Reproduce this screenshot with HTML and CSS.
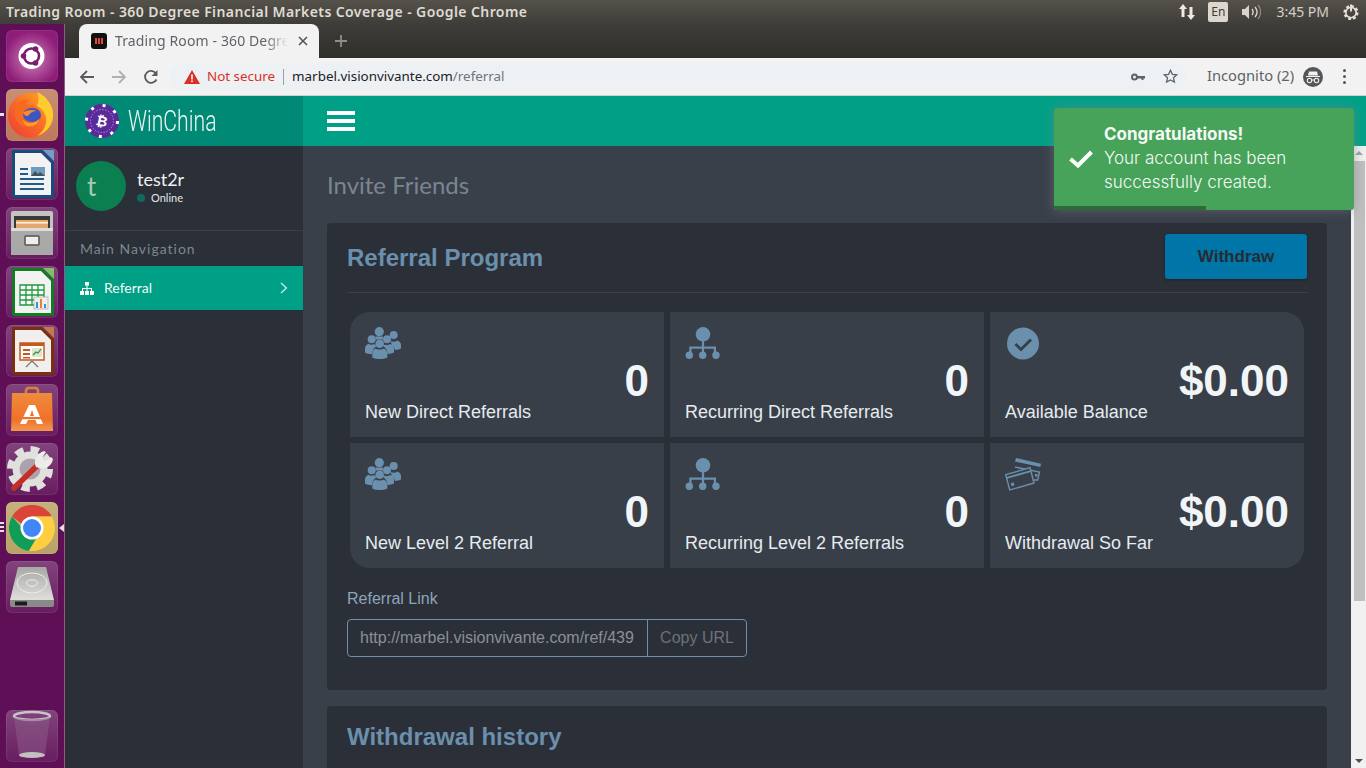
FILE: index.html
```html
<!DOCTYPE html>
<html lang="en">
  <head>
    <meta charset="UTF-8" />
    <title>Trading Room - 360 Degree Financial Markets Coverage</title>
    <link rel="stylesheet" href="styles.css">
  </head>
  <body>
    <svg class="defs">
      <symbol id="i-users" viewBox="0 0 36 32">
        <circle cx="14.300" cy="4.700" r="4.600" />
        <path d="M10.500 9.500h7.500v3h-7.500z" />
        <circle cx="28.700" cy="8" r="4" />
        <path d="M25 13.500c1 .800 2.500 1.200 3.800 1.200s2.500-.400 3.500-1.200c2 .600 3.700 2.300 3.700 4.500v3.500c-1.500 .800-3 1.200-6 1.500-.500-2-1.500-3.500-3-4.500-.500-2-1-3.500-2-5z" />
        <circle cx="6.700" cy="12.300" r="4" />
        <circle cx="22" cy="12.300" r="4" />
        <path d="M3.500 16.800c1 .800 2 1 3.200 1s2-.200 3-.800c.500 1 1 1.500 1.800 2.200-2.500 1.500-4 4-4.500 8C4 27 1.500 26.500 0 25.500V21.500c0-2 1.500-3.900 3.500-4.700z" />
        <path d="M18 17.500c1.200 .300 2.800 .500 4 .500s2.500-.500 3.500-1c2 .800 3.500 2.700 3.500 4.800v3.700c-1.500 .800-4 1.300-6.500 1.500-.500-4-2-6.500-4.500-8 .300-.500 .500-1 .500-1.500z" />
        <circle cx="14.700" cy="16.700" r="4.300" />
        <path d="M10.500 21.500c1.200 .700 2.800 1 4.300 1s3-.300 4.200-1c2 1 3.300 3 3.300 5.500v3.500c-2 1-5 1.500-7.500 1.500s-5.500-.500-7.500-1.500V27c0-2.500 1.200-4.500 3.200-5.500z" />
      </symbol>
      <symbol id="i-sitemap" viewBox="0 0 36 33">
        <circle cx="18" cy="7.300" r="7.300" />
        <path d="M16.900 13h2.200v6.600H31V27h-2.200v-5.200H19.100V27h-2.200v-5.200H6.500V27H4.300v-7.400h12.600z" />
        <circle cx="4.300" cy="28.300" r="3.700" />
        <circle cx="17.700" cy="28.300" r="3.700" />
        <circle cx="31" cy="28.300" r="3.700" />
      </symbol>
    </svg>

    <div class="panel">
      <div class="panel-title">Trading Room - 360 Degree Financial Markets Coverage - Google Chrome</div>
      <div class="panel-tray">
        <svg width="18" height="18" viewBox="0 0 18 18"><path d="M5 1l4 5H6.500v8h-3V6H1zM13 17l4-5h-2.500V4h-3v8H9z" fill="#eeeae2"/></svg>
        <span class="tray-lang">En</span>
        <svg width="20" height="18" viewBox="0 0 20 18"><path d="M1 6h3l4-4v14l-4-4H1z" fill="#d8d4cc"/><path d="M11 6c1.500 2 1.500 4 0 6M14 4c2.500 3 2.500 7 0 10" stroke="#d8d4cc" stroke-width="1.400" fill="none"/><path d="M17 2c3.500 4 3.500 10 0 14" stroke="#8d8a83" stroke-width="1.200" fill="none"/></svg>
        <span class="tray-clock">3:45 PM</span>
        <svg width="18" height="18" viewBox="0 0 18 18"><circle cx="9" cy="9.500" r="6" fill="none" stroke="#e4e0d8" stroke-width="3.200" stroke-dasharray="2.600 2" /><circle cx="9" cy="9.500" r="5.200" fill="none" stroke="#e4e0d8" stroke-width="1.600"/><path d="M9 1.500v7" stroke="#e4e0d8" stroke-width="2"/></svg>
      </div>
    </div>

    <div class="desktop">
      <nav class="launcher">
        <div class="tile tile-ubuntu">
          <svg viewBox="0 0 52 52"><circle cx="25.500" cy="26" r="13" fill="#fff"/><circle cx="25.500" cy="26" r="7.500" fill="none" stroke="#7a1f6d" stroke-width="2.600"/><circle cx="25.500" cy="26" r="5.200" fill="#fff"/><circle cx="17.500" cy="26" r="2.800" fill="#7a1f6d"/><circle cx="29.500" cy="19" r="2.800" fill="#7a1f6d"/><circle cx="29.500" cy="33" r="2.800" fill="#7a1f6d"/></svg>
        </div>
        <div class="tile tile-firefox pip">
          <svg viewBox="0 0 52 52"><defs><linearGradient id="ff" x1="1" y1="0" x2="0" y2="1"><stop offset="0" stop-color="#ffb21f"/><stop offset=".55" stop-color="#f8662a"/><stop offset="1" stop-color="#ee3a37"/></linearGradient></defs><circle cx="24.500" cy="26.500" r="22.500" fill="url(#ff)"/><path d="M31 3c11 5 17 15 16 25-1 9-7 16-16 19 7-5 10-12 9-18-1-6-5-10-9-12 2-5 2-10 0-14z" fill="#ffcb2f"/><path d="M11 14c4-3 8-4 13-3-3 1-4 3-4 5 7-1 14 3 15 10 1 6-4 12-11 12-8 1-14-4-15-11-.500-5 .500-9 2-13z" fill="#f76a22"/><ellipse cx="26" cy="26" rx="9" ry="7" fill="#3d56c4"/><path d="M17 24c3-3 9-4 14-2-4 0-7 2-8 4-2 2-4 1-6-2z" fill="#fb8a2a"/><path d="M17 31c3 4 11 5 16-1-1 5-6 8-11 7-3-1-5-3-5-6z" fill="#ffa22a"/></svg>
        </div>
        <div class="tile">
          <svg viewBox="0 0 52 52"><path d="M6 2h30l12 12v34a2 2 0 0 1-2 2H8a2 2 0 0 1-2-2z" fill="#174d7d"/><path d="M9 5h26l10 10v32H9z" fill="#f2f2f2"/><path d="M37 2l11 11V2z" fill="#6f9ec6"/><path d="M14 20h8v2h-8zM14 25h8v2h-8zM14 30h24v2H14zM14 35h24v2H14zM14 40h24v2H14z" fill="#1f5c8d"/><rect x="25" y="19" width="14" height="9" fill="#6f9dbd"/><path d="M25 28l4-5 3 3 2-2 5 4z" fill="#45525a"/></svg>
        </div>
        <div class="tile">
          <svg viewBox="0 0 52 52"><rect x="5" y="4" width="42" height="44" rx="2" fill="#c4c4c2"/><rect x="8" y="9" width="36" height="12" fill="#3c3835"/><rect x="10" y="13" width="32" height="8" fill="#e7a870"/><rect x="10" y="15" width="32" height="1.500" fill="#fff2e0"/><rect x="5" y="21" width="42" height="27" rx="1" fill="#a9a9a7"/><rect x="5" y="21" width="42" height="3" fill="#dcdcda"/><rect x="19" y="29" width="14" height="9" rx="1" fill="#eee" stroke="#55534f" stroke-width="1.500"/></svg>
        </div>
        <div class="tile">
          <svg viewBox="0 0 52 52"><path d="M6 2h30l12 12v34a2 2 0 0 1-2 2H8a2 2 0 0 1-2-2z" fill="#117c22"/><path d="M9 5h26l10 10v32H9z" fill="#f2f2f2"/><path d="M37 2l11 11V2z" fill="#7fbf66"/><path d="M14 19h24v20H14z" fill="#fff"/><path d="M14 19h24v20H14zM14 24h24M14 29h24M14 34h24M20 19v20M26 19v20M32 19v20" stroke="#1d9a38" stroke-width="1.300" fill="none"/><rect x="28" y="31" width="14" height="12" fill="#eee" stroke="#9a9a9a" stroke-width=".6"/><path d="M30 36h2v6h-2z" fill="#3594d6"/><path d="M34 33h2v9h-2z" fill="#e9802b"/><path d="M38 38h2v4h-2z" fill="#3594d6"/></svg>
        </div>
        <div class="tile">
          <svg viewBox="0 0 52 52"><path d="M6 2h30l12 12v34a2 2 0 0 1-2 2H8a2 2 0 0 1-2-2z" fill="#7a2f0f"/><path d="M9 5h26l10 10v32H9z" fill="#f0efed"/><path d="M37 2l11 11V2z" fill="#c47a4a"/><rect x="14" y="18" width="24" height="17" fill="#fff" stroke="#c65a1e" stroke-width="1.500"/><rect x="14" y="18" width="24" height="3" fill="#c65a1e"/><path d="M17 24h7v2h-7zM17 28h7v2h-7zM17 32h7v1.500h-7z" fill="#c65a1e"/><rect x="26" y="23" width="10" height="9" fill="#dbe6cf"/><path d="M27 30l3-3 2 1 3-4" stroke="#3c8a3c" stroke-width="1.200" fill="none"/><path d="M26 36l-6 6M26 36l6 6" stroke="#777" stroke-width="1.200"/></svg>
        </div>
        <div class="tile">
          <svg viewBox="0 0 52 52"><defs><linearGradient id="bag" x1="0" y1="0" x2="0" y2="1"><stop offset="0" stop-color="#f08a3c"/><stop offset=".7" stop-color="#ef7229"/><stop offset="1" stop-color="#f39650"/></linearGradient></defs><path d="M20 12V7c0-2 1-3 3-3h6c2 0 3 1 3 3v5" fill="none" stroke="#d9823f" stroke-width="2.500"/><path d="M6 9h40l1 38H5z" fill="url(#bag)"/><path d="M23 21h6l8 19h-6l-1.500-4h-7.500L20 40h-6z" fill="#fff"/><path d="M26 26l-2 6h4z" fill="#ef7229"/><rect x="15" y="33" width="22" height="2.200" fill="#ef7229"/></svg>
        </div>
        <div class="tile">
          <svg viewBox="0 0 52 52"><circle cx="24" cy="26" r="17.500" fill="#e0e0de"/><circle cx="24" cy="26" r="20" fill="none" stroke="#e0e0de" stroke-width="6" stroke-dasharray="8.500 7.200"/><circle cx="24" cy="26" r="10.500" fill="#aba2aa"/><path d="M8 45L33 21" stroke="#c42e25" stroke-width="5.500" stroke-linecap="round"/><path d="M30 24c-3-6 1-14 8-16l2 1-4 6 3 3 6-4 2 2c-1 7-8 11-14 9z" fill="#ececea"/></svg>
        </div>
        <div class="tile tile-chrome pip-triple active">
          <svg viewBox="0 0 52 52"><path d="M26 3A23 23 0 0 1 45.900 14.500L26 14.500 16 22 6.100 14.500A23 23 0 0 1 26 3z" fill="#db4437"/><path d="M6.100 14.500A23 23 0 0 0 23 48.800L33 32 16 26z" fill="#0f9d58"/><path d="M45.900 14.500A23 23 0 0 1 23 48.800L33 32 26 14.500z" fill="#ffcd40"/><circle cx="26" cy="26" r="11.500" fill="#fff"/><circle cx="26" cy="26" r="9" fill="#4285f4"/></svg>
        </div>
        <div class="tile">
          <svg viewBox="0 0 52 52"><defs><linearGradient id="hdd" x1="0" y1="0" x2="0" y2="1"><stop offset="0" stop-color="#a8a8a6"/><stop offset="1" stop-color="#dededc"/></linearGradient></defs><path d="M12 6h28l8 33H4z" fill="url(#hdd)"/><ellipse cx="26" cy="22" rx="15" ry="10" fill="none" stroke="#ededeb" stroke-width="1"/><ellipse cx="26" cy="22" rx="5.500" ry="3.200" fill="none" stroke="#eee" stroke-width="1"/><path d="M4 39h44v5a2 2 0 0 1-2 2H6a2 2 0 0 1-2-2z" fill="#8a8a88"/><path d="M9 40.500h12v4H9z" fill="#1c1c1c"/></svg>
        </div>
        <div class="tile tile-trash">
          <svg viewBox="0 0 52 52"><ellipse cx="26" cy="6" rx="18" ry="4" fill="none" stroke="#c8c4c8" stroke-width="2.500"/><path d="M8 7l5 38c3 3 23 3 26 0l5-38c-4 3-32 3-36 0z" fill="#8a5a86" fill-opacity=".55"/><ellipse cx="26" cy="45" rx="13" ry="3" fill="#c3c0c2"/></svg>
        </div>
      </nav>

      <div class="browser">
        <div class="tabstrip">
          <div class="tab">
            <span class="favicon"><i></i><i></i><i></i></span>
            <span class="tab-title">Trading Room - 360 Degre</span>
            <svg class="tab-close" width="10" height="10" viewBox="0 0 10 10"><path d="M1 1l8 8M9 1L1 9" stroke="#555" stroke-width="1.600"/></svg>
          </div>
          <svg class="tab-new" width="14" height="14" viewBox="0 0 14 14"><path d="M7 1v12M1 7h12" stroke="#8f8d88" stroke-width="1.800"/></svg>
        </div>
        <div class="toolbar">
          <svg class="nav-icon" width="16" height="16" viewBox="0 0 16 16"><path d="M15 8H2M8 2L2 8l6 6" fill="none" stroke="#5a5a5a" stroke-width="1.800"/></svg>
          <svg class="nav-icon" width="16" height="16" viewBox="0 0 16 16"><path d="M1 8h13M8 2l6 6-6 6" fill="none" stroke="#b0b0b0" stroke-width="1.800"/></svg>
          <svg class="nav-icon" width="16" height="16" viewBox="0 0 16 16"><path d="M13.500 10.500A6 6 0 1 1 13 4.500" fill="none" stroke="#5a5a5a" stroke-width="1.800"/><path d="M14.500 1v6h-6z" fill="#5a5a5a"/></svg>
          <div class="omnibox">
            <svg width="16" height="14" viewBox="0 0 16 14"><path d="M8 0l8 14H0z" fill="#d93025"/><path d="M7.200 4.500h1.600v5H7.200zM7.200 10.500h1.600V12H7.200z" fill="#fff"/></svg>
            <span class="not-secure">Not secure</span>
            <span class="omni-sep"></span>
            <span class="omni-url">marbel.visionvivante.com<span class="omni-path">/referral</span></span>
            <span class="omni-right">
              <svg width="14" height="8" viewBox="0 0 14 8"><circle cx="3.500" cy="4" r="2.500" fill="none" stroke="#5f6368" stroke-width="2"/><path d="M6 3h8v2.500h-1.500V7h-2V5.500H6z" fill="#5f6368"/></svg>
              <svg width="15" height="15" viewBox="0 0 15 15"><path d="M7.500 1.300l1.900 4 4.300.5-3.200 3 .9 4.300-3.900-2.200-3.900 2.200.9-4.300-3.200-3 4.300-.5z" fill="none" stroke="#5f6368" stroke-width="1.300"/></svg>
            </span>
          </div>
          <span class="incognito">Incognito (2)</span>
          <svg width="20" height="20" viewBox="0 0 20 20"><circle cx="10" cy="10" r="10" fill="#55565a"/><path d="M3 9h14v1H3zM6 4.500h8L15 8.500H5z" fill="#f2f2f2"/><circle cx="6.500" cy="13.500" r="2.200" fill="none" stroke="#f2f2f2" stroke-width="1.100"/><circle cx="13.500" cy="13.500" r="2.200" fill="none" stroke="#f2f2f2" stroke-width="1.100"/><path d="M8.500 13h3" stroke="#f2f2f2" stroke-width="1"/></svg>
          <span class="menu-dots"><i></i><i></i><i></i></span>
        </div>

        <div class="page">
          <aside class="sidebar">
            <div class="brand">
              <svg width="34" height="34" viewBox="0 0 34 34">
                <circle cx="17" cy="17" r="17" fill="#5b2a9a"/>
                <circle cx="17" cy="17" r="15.500" fill="none" stroke="#fff" stroke-width="3" stroke-dasharray="3 9.200"/>
                <circle cx="17" cy="17" r="11.500" fill="none" stroke="#b9a2dc" stroke-width=".8" stroke-dasharray="1.500 1.500"/>
                <text x="17" y="22" class="brand-coin" transform="rotate(12 17 17)">₿</text>
              </svg>
              <span class="brand-name">WinChina</span>
            </div>
            <div class="user">
              <div class="avatar">t</div>
              <div>
                <div class="user-name">test2r</div>
                <div class="user-status"><i></i>Online</div>
              </div>
            </div>
            <div class="nav-title">Main Navigation</div>
            <a class="nav-item">
              <svg width="14" height="13" viewBox="0 0 14 13"><path d="M5 0h4v3.500H7.500V6H12v3h2v4h-4V9h1V7H7.500v2H9v4H5V9h1.500V7H3v2h1v4H0V9h2V6h4.500V3.500H5z" fill="#fff"/></svg>
              <span>Referral</span>
              <svg class="nav-arrow" width="8" height="12" viewBox="0 0 8 12"><path d="M1 1l5.500 5L1 11" fill="none" stroke="#cfeee8" stroke-width="1.200"/></svg>
            </a>
          </aside>

          <div class="main">
            <header class="topbar">
              <span class="burger"><i></i><i></i><i></i></span>
            </header>
            <div class="body-row">
              <main class="content">
                <h1 class="page-title">Invite Friends</h1>

                <section class="card">
                  <div class="card-head">
                    <h2>Referral Program</h2>
                    <button class="btn-withdraw">Withdraw</button>
                  </div>

                  <div class="stats">
                    <div class="stat stat-tl">
                      <div class="stat-icon"><svg width="36" height="32"><use href="#i-users" /></svg></div>
                      <div class="stat-value">0</div>
                      <div class="stat-label">New Direct Referrals</div>
                    </div>
                    <div class="stat">
                      <div class="stat-icon"><svg width="36" height="33"><use href="#i-sitemap" /></svg></div>
                      <div class="stat-value">0</div>
                      <div class="stat-label">Recurring Direct Referrals</div>
                    </div>
                    <div class="stat stat-tr">
                      <div class="stat-icon"><svg width="36" height="33" viewBox="0 0 36 33"><circle cx="18" cy="16.500" r="16" fill="#6a90ad"/><path d="M10.500 17l5.500 5.500 10-10" fill="none" stroke="#393f49" stroke-width="3"/></svg></div>
                      <div class="stat-value">$0.00</div>
                      <div class="stat-label">Available Balance</div>
                    </div>
                    <div class="stat stat-bl">
                      <div class="stat-icon"><svg width="36" height="32"><use href="#i-users" /></svg></div>
                      <div class="stat-value">0</div>
                      <div class="stat-label">New Level 2 Referral</div>
                    </div>
                    <div class="stat">
                      <div class="stat-icon"><svg width="36" height="33"><use href="#i-sitemap" /></svg></div>
                      <div class="stat-value">0</div>
                      <div class="stat-label">Recurring Level 2 Referrals</div>
                    </div>
                    <div class="stat stat-br">
                      <div class="stat-icon">
                        <svg width="37" height="33" viewBox="0 0 37 33">
                          <path d="M11 0l25 5.700-.7 3.300-25.300-5.500z" fill="#6a90ad"/>
                          <path d="M10 9l24.500 5-1.800 8H29" fill="none" stroke="#6a90ad" stroke-width="1.400"/>
                          <path d="M.7 16.700L25 9.700l4 15.300-24.300 7z" fill="#393f49" stroke="#6a90ad" stroke-width="1.400"/>
                          <path d="M1.500 19l24-6.800 .5 1.800-24 6.800z" fill="#6a90ad"/>
                          <rect x="6" y="25" width="3" height="3" fill="#6a90ad" transform="rotate(-16 7 26)"/>
                          <rect x="30" y="16" width="2.500" height="2.500" fill="#6a90ad"/>
                        </svg>
                      </div>
                      <div class="stat-value">$0.00</div>
                      <div class="stat-label">Withdrawal So Far</div>
                    </div>
                  </div>

                  <label class="link-label" for="refLink">Referral Link</label>
                  <div class="link-group">
                    <input id="refLink" type="text" value="http://marbel.visionvivante.com/ref/439" readonly />
                    <span class="link-copy">Copy URL</span>
                  </div>
                </section>

                <section class="card card-history">
                  <h2>Withdrawal history</h2>
                </section>
              </main>
              <div class="scrollbar">
                <span class="scroll-up"></span>
                <span class="scroll-thumb"></span>
                <span class="scroll-down"></span>
              </div>
            </div>

            <div class="toast">
              <svg width="24" height="19" viewBox="0 0 24 19"><path d="M1.500 10l7.500 6.500L22.500 3" fill="none" stroke="#fff" stroke-width="4"/></svg>
              <div class="toast-text">
                <strong>Congratulations!</strong>
                Your account has been successfully created.
              </div>
              <span class="toast-progress"></span>
            </div>
          </div>
        </div>
      </div>
    </div>
  </body>
</html>
```

FILE: styles.css
```css
html,
body {
  margin: 0;
  height: 100%;
}

body {
  width: 1366px;
  height: 768px;
  overflow: hidden;
  display: flex;
  flex-direction: column;
  font-family: "Liberation Sans", sans-serif;
  background-color: #2b2f38;
}

.defs {
  display: none;
}

h1,
h2 {
  margin: 0;
}

/* ubuntu top panel */
.panel {
  height: 24px;
  flex: none;
  display: flex;
  align-items: center;
  justify-content: space-between;
  padding: 0 6px;
  box-sizing: border-box;
  background: linear-gradient(#55524b, #3f3d38);
  color: #dfdbd2;
}

.panel-title {
  margin-top: -2px;
  font-family: "Noto Sans", sans-serif;
  font-size: 14px;
  font-weight: 600;
  letter-spacing: 0.41px;
  white-space: nowrap;
}

.panel-tray {
  display: flex;
  align-items: center;
}

.tray-lang {
  width: 20px;
  height: 20px;
  margin: 0 13px 0 12px;
  border-radius: 2px;
  background-color: #dcd8d0;
  color: #3f3d38;
  font-family: "Noto Sans", sans-serif;
  font-size: 12px;
  line-height: 20px;
  text-align: center;
}

.tray-clock {
  margin: -2px 13px 0 15px;
  font-family: "Noto Sans", sans-serif;
  font-size: 14px;
  color: #d4d0c8;
}

.desktop {
  flex: 1;
  display: flex;
  min-height: 0;
}

/* launcher */
.launcher {
  width: 65px;
  flex: none;
  box-sizing: border-box;
  padding: 6px 0;
  display: flex;
  flex-direction: column;
  align-items: flex-start;
  gap: 7px;
  background-color: #5e0f56;
  border-right: 1px solid #8b5f86;
}

.tile {
  position: relative;
  width: 52px;
  height: 52px;
  margin-left: 6px;
  flex: none;
  border-radius: 6px;
  background: linear-gradient(rgba(255, 255, 255, 0.22), rgba(255, 255, 255, 0.06));
  box-shadow: inset 0 0 0 1px rgba(255, 255, 255, 0.08);
}

.tile svg {
  display: block;
  width: 52px;
  height: 52px;
}

.tile-ubuntu {
  background: radial-gradient(circle at 50% 55%, #cf86bb, #8e1c78 72%);
}

.tile-firefox {
  background-color: #b9704f;
}

.tile-chrome {
  background-color: #b59c5c;
}

.tile-trash {
  margin-top: auto;
}

.pip::before {
  content: "";
  position: absolute;
  left: -6px;
  top: 24px;
  width: 4px;
  height: 3px;
  background-color: #e6e0e6;
}

.pip-triple::before {
  content: "";
  position: absolute;
  left: -6px;
  top: 20px;
  width: 4px;
  height: 2px;
  background-color: #e6e0e6;
  box-shadow: 0 4px 0 #e6e0e6, 0 8px 0 #e6e0e6;
}

.active::after {
  content: "";
  position: absolute;
  right: -6px;
  top: 22px;
  border: 4px solid transparent;
  border-right: 5px solid #e6e0e6;
  border-left: 0;
}

/* chrome */
.browser {
  flex: 1;
  min-width: 0;
  display: flex;
  flex-direction: column;
}

.tabstrip {
  height: 34px;
  flex: none;
  display: flex;
  align-items: flex-end;
  padding-left: 14px;
  background: linear-gradient(#3f3d39, #2f2e2b);
}

.tab {
  width: 240px;
  height: 34px;
  box-sizing: border-box;
  padding: 0 11px 0 12px;
  display: flex;
  align-items: center;
  border-radius: 8px 8px 0 0;
  background-color: #f2f2f2;
}

.favicon {
  width: 16px;
  height: 16px;
  flex: none;
  display: flex;
  align-items: center;
  justify-content: center;
  gap: 1px;
  border-radius: 3px;
  background-color: #111;
}

.favicon i {
  width: 2px;
  height: 6px;
  background-color: #e0463c;
}

.tab-title {
  flex: 1;
  margin: -2px 8px 0;
  white-space: nowrap;
  font-family: "Noto Sans", sans-serif;
  font-size: 14px;
  letter-spacing: 0.12px;
  color: #5f6368;
  -webkit-mask-image: linear-gradient(90deg, #000 86%, transparent 99%);
  mask-image: linear-gradient(90deg, #000 86%, transparent 99%);
}

.tab-new {
  margin: 0 0 10px 15px;
}

.toolbar {
  height: 38px;
  flex: none;
  box-sizing: border-box;
  display: flex;
  align-items: center;
  padding: 0 15px 0 14px;
  background-color: #f2f2f2;
  border-bottom: 1px solid #cfd2d2;
}

.nav-icon {
  margin-right: 16px;
}

.omnibox {
  width: 1018px;
  height: 28px;
  margin-left: -6px;
  box-sizing: border-box;
  padding: 0 9px 0 15px;
  display: flex;
  align-items: center;
  border-radius: 14px;
  background-color: #eef1f4;
  font-family: "Noto Sans", sans-serif;
  font-size: 13.400px;
}

.not-secure {
  margin: -2px 0 0 7px;
  color: #d93025;
}

.omni-sep {
  width: 1px;
  height: 16px;
  margin: 0 8px;
  background-color: #9aa0a6;
}

.omni-url {
  margin-top: -2px;
  color: #202124;
}

.omni-path {
  color: #70757a;
}

.omni-right {
  margin-left: auto;
  display: flex;
  align-items: center;
  gap: 18px;
}

.incognito {
  margin: -4px 9px 0 20px;
  font-family: "Noto Sans", sans-serif;
  font-size: 14.700px;
  color: #5f6368;
}

.menu-dots {
  margin-left: 20px;
  display: flex;
  flex-direction: column;
  gap: 3px;
}

.menu-dots i {
  width: 3px;
  height: 3px;
  border-radius: 50%;
  background-color: #55565a;
}

/* page */
.page {
  flex: 1;
  min-height: 0;
  display: flex;
}

.sidebar {
  width: 238px;
  flex: none;
  background-color: #2b2f38;
}

.brand {
  height: 50px;
  box-sizing: border-box;
  padding-left: 20px;
  display: flex;
  align-items: center;
  background-color: #008974;
}

.brand-coin {
  font-family: "DejaVu Sans", sans-serif;
  font-size: 14px;
  font-weight: 700;
  fill: #fff;
  text-anchor: middle;
}

.brand-name {
  margin-left: 9px;
  font-family: "Roboto", sans-serif;
  font-size: 29px;
  font-weight: 300;
  color: #eef7f4;
  transform: scaleX(0.73);
  transform-origin: left center;
}

.user {
  height: 85px;
  box-sizing: border-box;
  padding: 15px 11px;
  display: flex;
  gap: 11px;
  border-bottom: 1px solid #393e48;
}

.avatar {
  width: 50px;
  height: 50px;
  flex: none;
  border-radius: 50%;
  background-color: #0c7f50;
  color: #a7c9b8;
  font-family: "Lato", sans-serif;
  font-size: 26px;
  line-height: 50px;
  padding-left: 11px;
  box-sizing: border-box;
}

.user-name {
  margin-top: 7px;
  font-family: "Lato", sans-serif;
  font-size: 18px;
  line-height: 23px;
  color: #eef1f3;
}

.user-status {
  display: flex;
  align-items: center;
  gap: 6px;
  font-family: "Lato", sans-serif;
  font-size: 11px;
  line-height: 14px;
  color: #e4e8ea;
}

.user-status i {
  width: 8px;
  height: 8px;
  border-radius: 50%;
  background-color: #116a5e;
}

.nav-title {
  height: 35px;
  padding-left: 15px;
  font-family: "Lato", sans-serif;
  font-size: 14px;
  line-height: 35px;
  letter-spacing: 1px;
  color: #7e8791;
}

.nav-item {
  height: 44px;
  padding: 0 15px;
  display: flex;
  align-items: center;
  background-color: #00a086;
  color: #f2faf8;
  font-family: "Lato", sans-serif;
  font-size: 14px;
}

.nav-item span {
  margin: -2px 0 0 10px;
}

.nav-arrow {
  margin-left: auto;
}

.main {
  position: relative;
  flex: 1;
  min-width: 0;
  display: flex;
  flex-direction: column;
  background-color: #3a404a;
}

.topbar {
  height: 50px;
  flex: none;
  padding-left: 24px;
  display: flex;
  align-items: center;
  background-color: #00a086;
}

.burger {
  display: flex;
  flex-direction: column;
  gap: 4px;
}

.burger i {
  width: 28px;
  height: 4px;
  background-color: #fff;
}

.body-row {
  flex: 1;
  min-height: 0;
  display: flex;
}

.content {
  flex: 1;
  min-width: 0;
  overflow: hidden;
  padding: 0 24px;
}

.page-title {
  padding-top: 24px;
  font-family: "Lato", sans-serif;
  font-size: 24px;
  font-weight: 400;
  line-height: 29px;
  color: #7a8591;
}

.card {
  margin-top: 24px;
  padding: 11px 20px 33px;
  border-radius: 4px;
  background-color: #2b2f38;
}

.card h2 {
  font-size: 24px;
  line-height: 28px;
  color: #6a90ad;
}

.card-head {
  height: 58px;
  display: flex;
  align-items: flex-start;
  justify-content: space-between;
  border-bottom: 1px solid #3a404a;
}

.card-head h2 {
  margin-top: 10px;
}

.btn-withdraw {
  width: 142px;
  height: 45px;
  border: none;
  border-radius: 3px;
  background-color: #0075a8;
  color: #262b33;
  font-family: "Liberation Sans", sans-serif;
  font-size: 17px;
  font-weight: 700;
  box-shadow: 0 1px 3px rgba(0, 0, 0, 0.3);
}

.stats {
  margin: 19px 3px 0;
  display: grid;
  grid-template-columns: repeat(3, 314px);
  grid-auto-rows: 125px;
  gap: 6px;
}

.stat {
  padding: 15px;
  background-color: #393f49;
}

.stat-tl {
  border-top-left-radius: 20px;
}

.stat-tr {
  border-top-right-radius: 20px;
}

.stat-bl {
  border-bottom-left-radius: 20px;
}

.stat-br {
  border-bottom-right-radius: 20px;
}

.stat-icon {
  height: 33px;
  fill: #6a90ad;
}

.stat-icon svg {
  display: block;
}

.stat-value {
  font-size: 44px;
  font-weight: 700;
  line-height: 42px;
  text-align: right;
  color: #f2f5f7;
}

.stat-label {
  font-size: 18px;
  line-height: 20px;
  color: #e6ebef;
}

.link-label {
  display: block;
  margin-top: 21px;
  font-size: 16px;
  line-height: 20px;
  color: #8ea5b8;
}

.link-group {
  width: 400px;
  height: 38px;
  margin-top: 10px;
  box-sizing: border-box;
  display: flex;
  border: 1px solid #6a90ad;
  border-radius: 4px;
}

.link-group input {
  width: 300px;
  box-sizing: border-box;
  padding: 0 12px;
  border: none;
  border-right: 1px solid #6a90ad;
  background: transparent;
  color: #8a8f96;
  font-family: "Liberation Sans", sans-serif;
  font-size: 16px;
}

.link-copy {
  flex: 1;
  text-align: center;
  font-size: 16px;
  line-height: 36px;
  color: #6b727b;
}

.card-history {
  margin-top: 16px;
  padding-top: 17px;
}

/* page scrollbar */
.scrollbar {
  width: 15px;
  flex: none;
  display: flex;
  flex-direction: column;
  align-items: center;
  background-color: #f1f1f1;
}

.scroll-up {
  margin-top: 5px;
  border: 4px solid transparent;
  border-bottom: 4px solid #a3a3a3;
  border-top: 0;
}

.scroll-thumb {
  width: 11px;
  height: 440px;
  margin: 6px 0 0 2px;
  background-color: #bfbfbf;
}

.scroll-down {
  margin-top: auto;
  margin-bottom: 5px;
  border: 4px solid transparent;
  border-top: 4px solid #505050;
  border-bottom: 0;
}

/* toast */
.toast {
  position: absolute;
  left: 751px;
  top: 12px;
  width: 300px;
  height: 102px;
  box-sizing: border-box;
  padding: 0 20px 2px 15px;
  display: flex;
  align-items: center;
  gap: 11px;
  overflow: hidden;
  border-radius: 3px;
  background-color: #47a25a;
  box-shadow: 0 0 12px rgba(120, 130, 140, 0.55);
  color: #f4faf5;
  font-family: "Inter", sans-serif;
  font-size: 17px;
  font-weight: 300;
  line-height: 24px;
}

.toast svg {
  flex: none;
}

.toast-text strong {
  display: block;
  font-weight: 700;
}

.toast-progress {
  position: absolute;
  left: 0;
  bottom: 0;
  width: 152px;
  height: 4px;
  background-color: #2c6b38;
}
```
